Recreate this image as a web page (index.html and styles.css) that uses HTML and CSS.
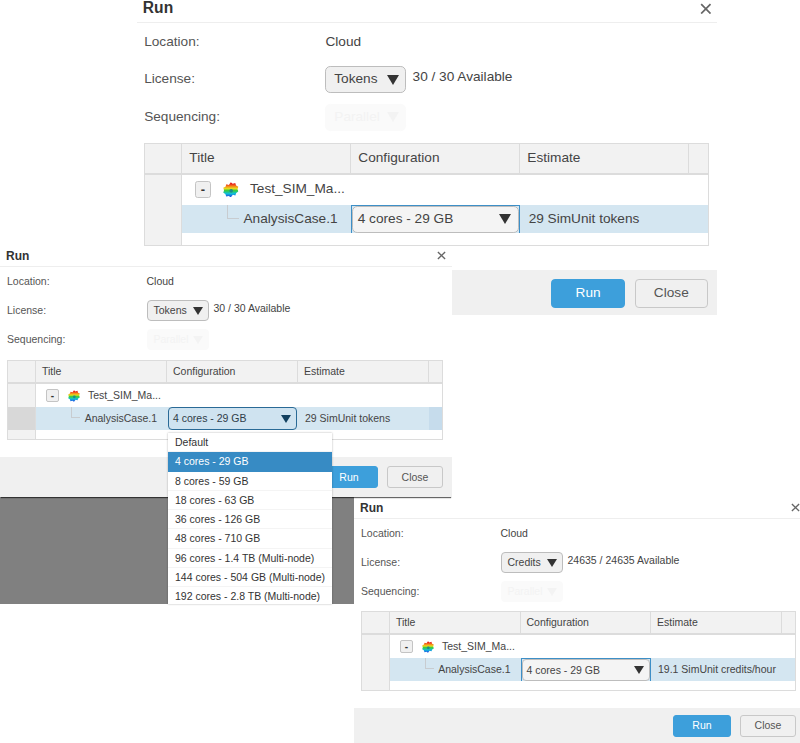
FILE: index.html
```html
<!DOCTYPE html>
<html lang="en">
<head>
<meta charset="utf-8">
<title>Run</title>
<link rel="stylesheet" href="styles.css">
</head>
<body>
<svg class="defs" width="0" height="0" aria-hidden="true">
  <defs>
    <linearGradient id="rainbow" x1="0" y1="0" x2="0" y2="1">
      <stop offset=".1" stop-color="#e8201c"/>
      <stop offset=".3" stop-color="#f59a1a"/>
      <stop offset=".42" stop-color="#e4dc20"/>
      <stop offset=".55" stop-color="#38cc3c"/>
      <stop offset=".75" stop-color="#10c0d8"/>
      <stop offset="1" stop-color="#1c38e8"/>
    </linearGradient>
    <symbol id="mesh" viewBox="0 0 12 12">
      <path fill="url(#rainbow)" d="M6 .2l1.5 1.2 1.9-.6.7 1.9 1.7.9-.6 1.9.6 1.9-1.6 1-.7 1.9-1.9-.5L6 11.8l-1.6-1.1-1.9.5-.7-1.9-1.6-1 .6-1.9-.6-1.9 1.7-.9.7-1.9 1.9.6z"/>
      <circle cx="6.3" cy="6.8" r="1.4" fill="#1d8a8c"/>
    </symbol>
    <symbol id="close" viewBox="0 0 10 10">
      <path d="M1 1l8 8M9 1l-8 8" stroke="#666" stroke-width="1.5" fill="none"/>
    </symbol>
  </defs>
</svg>

<div class="window window-a">
  <section class="dialog dialog-a">
    <header class="head"><h1>Run</h1><svg class="x"><use href="#close"/></svg></header>
    <div class="form">
      <span class="label">Location:</span><span class="value">Cloud</span>
      <span class="label">License:</span>
      <div class="value picker"><div class="select"><span>Tokens</span><i class="arrow"></i></div><span class="avail">30 / 30 Available</span></div>
      <span class="label">Sequencing:</span>
      <div class="value"><div class="select off"><span>Parallel</span><i class="arrow"></i></div></div>
    </div>
    <div class="grid">
      <div class="th stub"></div><div class="th">Title</div><div class="th">Configuration</div><div class="th">Estimate</div><div class="th end"></div>
      <div class="stub"></div>
      <div class="root"><span class="minus">-</span><svg class="mesh"><use href="#mesh"/></svg><span>Test_SIM_Ma...</span></div>
      <div class="blank"></div>
      <div class="stub"></div>
      <div class="cell name"><i class="elbow"></i>AnalysisCase.1</div>
      <div class="cell cfg"><div class="select wide"><span>4 cores - 29 GB</span><i class="arrow"></i></div></div>
      <div class="cell est">29 SimUnit tokens</div>
      <div class="stub"></div><div class="blank span4"></div>
    </div>
    <footer class="foot"><button class="btn primary">Run</button><button class="btn">Close</button></footer>
  </section>
</div>

<div class="backdrop"></div>

<div class="window window-c">
  <section class="dialog dialog-c">
    <header class="head"><h1>Run</h1><svg class="x"><use href="#close"/></svg></header>
    <div class="form">
      <span class="label">Location:</span><span class="value">Cloud</span>
      <span class="label">License:</span>
      <div class="value picker"><div class="select"><span>Credits</span><i class="arrow"></i></div><span class="avail">24635 / 24635 Available</span></div>
      <span class="label">Sequencing:</span>
      <div class="value"><div class="select off"><span>Parallel</span><i class="arrow"></i></div></div>
    </div>
    <div class="grid">
      <div class="th stub"></div><div class="th">Title</div><div class="th">Configuration</div><div class="th">Estimate</div><div class="th end"></div>
      <div class="stub"></div>
      <div class="root"><span class="minus">-</span><svg class="mesh"><use href="#mesh"/></svg><span>Test_SIM_Ma...</span></div>
      <div class="blank"></div>
      <div class="stub"></div>
      <div class="cell name"><i class="elbow"></i>AnalysisCase.1</div>
      <div class="cell cfg"><div class="select wide"><span>4 cores - 29 GB</span><i class="arrow"></i></div></div>
      <div class="cell est">19.1 SimUnit credits/hour</div>
      <div class="stub"></div><div class="blank span4"></div>
    </div>
    <footer class="foot"><button class="btn primary">Run</button><button class="btn">Close</button></footer>
  </section>
</div>

<div class="window window-b">
  <section class="dialog dialog-b">
    <header class="head"><h1>Run</h1><svg class="x"><use href="#close"/></svg></header>
    <div class="form">
      <span class="label">Location:</span><span class="value">Cloud</span>
      <span class="label">License:</span>
      <div class="value picker"><div class="select"><span>Tokens</span><i class="arrow"></i></div><span class="avail">30 / 30 Available</span></div>
      <span class="label">Sequencing:</span>
      <div class="value"><div class="select off"><span>Parallel</span><i class="arrow"></i></div></div>
    </div>
    <div class="grid">
      <div class="th stub"></div><div class="th">Title</div><div class="th">Configuration</div><div class="th">Estimate</div><div class="th end"></div>
      <div class="stub"></div>
      <div class="root"><span class="minus">-</span><svg class="mesh"><use href="#mesh"/></svg><span>Test_SIM_Ma...</span></div>
      <div class="blank"></div>
      <div class="stub active"></div>
      <div class="cell name"><i class="elbow"></i>AnalysisCase.1</div>
      <div class="cell cfg"><div class="select wide open"><span>4 cores - 29 GB</span><i class="arrow"></i></div>
        <ul class="menu">
          <li>Default</li>
          <li class="on">4 cores - 29 GB</li>
          <li>8 cores - 59 GB</li>
          <li>18 cores - 63 GB</li>
          <li>36 cores - 126 GB</li>
          <li>48 cores - 710 GB</li>
          <li>96 cores - 1.4 TB (Multi-node)</li>
          <li>144 cores - 504 GB (Multi-node)</li>
          <li>192 cores - 2.8 TB (Multi-node)</li>
        </ul>
      </div>
      <div class="cell est">29 SimUnit tokens</div>
      <div class="stub"></div><div class="blank span4"></div>
    </div>
    <footer class="foot"><button class="btn primary">Run</button><button class="btn">Close</button></footer>
  </section>
</div>
</body>
</html>
```
FILE: styles.css
```css
* { box-sizing: border-box; }
html, body { margin: 0; height: 100%; background: #fff; }
body {
  position: relative;
  width: 800px;
  height: 743px;
  overflow: hidden;
  font: 10.5px/1.2 "Liberation Sans", Arial, sans-serif;
  color: #3a3a3a;
}
.defs { position: absolute; }

.window { position: absolute; }
.window-a { left: 137px; top: 0; }
.window-b { left: 0; top: 249px; z-index: 3; }
.window-c { left: 354px; top: 497px; z-index: 2; }
.backdrop {
  position: absolute;
  left: 0;
  top: 497px;
  width: 354px;
  height: 107px;
  background: #808080;
  z-index: 1;
}

.dialog {
  --pad: 7px;
  --pad-r: 9px;
  --title: 6px;
  --col: 131px;
  --gap-top: 4px;
  background: #fff;
  display: flex;
  flex-direction: column;
}
.dialog-a { zoom: 1.3; width: 446px; --pad: 5.5px; --pad-r: 6px; --title: 4.5px; --col: 130px; --gap-top: 3.8px; }
.dialog-b { width: 452px; height: 248px; box-shadow: 0 2px 1px -1px rgba(0,0,0,.6); }
.dialog-c { width: 446px; height: 246px; --pad-r: 4px; --col: 130.5px; }

.head {
  height: 18px;
  display: flex;
  align-items: flex-start;
  justify-content: space-between;
  padding: 0 6px 0 var(--title);
  border-bottom: 1px solid #eee;
}
.dialog-c .head { height: 22px; padding: 4px 2px 0 6px; }
.dialog-a .head h1 { margin-top: -.7px; }
.head h1 { margin: 0; font-size: 12px; line-height: 14px; font-weight: 700; color: #333; }
.x { width: 9px; height: 9px; margin-top: 2px; margin-right: -2px; }
.dialog-b .x { margin-right: 0; }

.form {
  display: grid;
  grid-template-columns: 139.5px 1fr;
  grid-auto-rows: 21px;
  row-gap: 8px;
  align-items: center;
  padding: var(--gap-top) var(--pad-r) 0 var(--pad);
  color: #555;
}
.value { color: #444; }
.picker { display: flex; align-items: center; gap: 5px; }
.avail { position: relative; top: -2px; }

.select {
  width: 62px;
  height: 21px;
  display: flex;
  align-items: center;
  justify-content: space-between;
  padding: 0 5px 0 6px;
  background: #f0f0f0;
  border: 1px solid #bdbdbd;
  border-radius: 4px;
  color: #444;
}
.select.off { background: #fafafa; border-color: #fafafa; color: #f3f3f3; }
.select.off .arrow { border-top-color: #f3f3f3; }
.select.wide { width: 100%; height: 100%; padding: 0 5px 0 4px; background: #f4f4f4; }
.select.open { background: #cfe3f0; border-color: #2a6a96; color: #2f3d48; }
.select.open .arrow { border-top-color: #12405f; }
.arrow {
  width: 0;
  height: 0;
  border-left: 5px solid transparent;
  border-right: 5px solid transparent;
  border-top: 8px solid #333;
}

.grid {
  margin: 10px var(--pad-r) 0 var(--pad);
  display: grid;
  grid-template-columns: 28px var(--col) var(--col) var(--col) 1fr;
  grid-template-rows: 23px 23px 23px 9px;
  border: 1px solid #dcdcdc;
  background: #fff;
  color: #444;
}
.dialog-a .grid { margin-top: 9.2px; grid-template-rows: 23.6px 23px 22.2px 9px; }
.dialog-c .grid { margin-top: 9px; }
.th {
  background: #f2f2f2;
  border-right: 1px solid #dcdcdc;
  border-bottom: 2px solid #dcdcdc;
  padding: 0 6px;
  display: flex;
  align-items: center;
}
.th.end { border-right: 0; }
.stub { background: #f2f2f2; border-right: 1px solid #dcdcdc; }
.stub.active { background: #d8d8d8; }
.root { display: flex; align-items: center; padding-left: 10px; }
.blank { grid-column: span 3; }
.span4 { grid-column: span 4; }
.minus {
  width: 13px;
  height: 13px;
  display: grid;
  place-items: center;
  font-weight: 700;
  font-size: 10px;
  line-height: 1;
  background: #f0f0f0;
  border: 1px solid #c4c4c4;
  border-radius: 2px;
  color: #333;
}
.mesh { width: 12px; height: 12px; margin: 0 8px 0 9px; }
.dialog-a .mesh { margin-right: 8.7px; }
.cell { background: #d4e6f1; display: flex; align-items: center; position: relative; }
.name { justify-content: flex-end; padding-right: 10px; }
.elbow {
  position: absolute;
  left: 35px;
  top: 0;
  width: 9px;
  height: 11px;
  border-left: 1px solid #c8ccd0;
  border-bottom: 1px solid #c8ccd0;
}
.cfg { padding: 0; border: solid #3d8fc7; border-width: 1px 1px 0 1px; }
.dialog-b .cfg { padding: 0 1px; border: 0; }
.est { padding-left: 7px; grid-column: span 2; }
.dialog-b .est { background: linear-gradient(to right, #d4e6f1 131px, #c6dcec 131px); }

.menu {
  position: absolute;
  z-index: 5;
  left: 1px;
  top: 26px;
  width: 164px;
  height: 171px;
  overflow: hidden;
  margin: 0;
  padding: 0;
  list-style: none;
  background: #fff;
  box-shadow: 0 0 2px rgba(0,0,0,.3);
  color: #333;
}
.menu li {
  height: 19.25px;
  line-height: 19px;
  padding-left: 7px;
  border-bottom: 1px solid #f4f4f4;
  white-space: nowrap;
}
.menu li.on { background: #378bc4; color: #fff; border-bottom: 0; }

.foot {
  margin-top: auto;
  display: flex;
  justify-content: flex-end;
  align-items: center;
  gap: 9px;
  padding: 0 var(--pad-r) 0 0;
  background: #f0f0f0;
}
.dialog-a .foot { margin-top: 18.5px; height: 34.6px; gap: 7.5px; padding: 1.4px 7px 0 0; }
.dialog-a .btn.primary { width: 57px; }
.dialog-b .foot { height: 40px; }
.dialog-c .foot { height: 35px; }
.btn {
  width: 56px;
  height: 22px;
  padding: 0;
  font: inherit;
  color: #555;
  background: #f0f0f0;
  border: 1px solid #c8c8c8;
  border-radius: 3px;
}
.btn.primary { width: 58px; color: #fff; background: #3d9fdb; border-color: #3d9fdb; }
```
